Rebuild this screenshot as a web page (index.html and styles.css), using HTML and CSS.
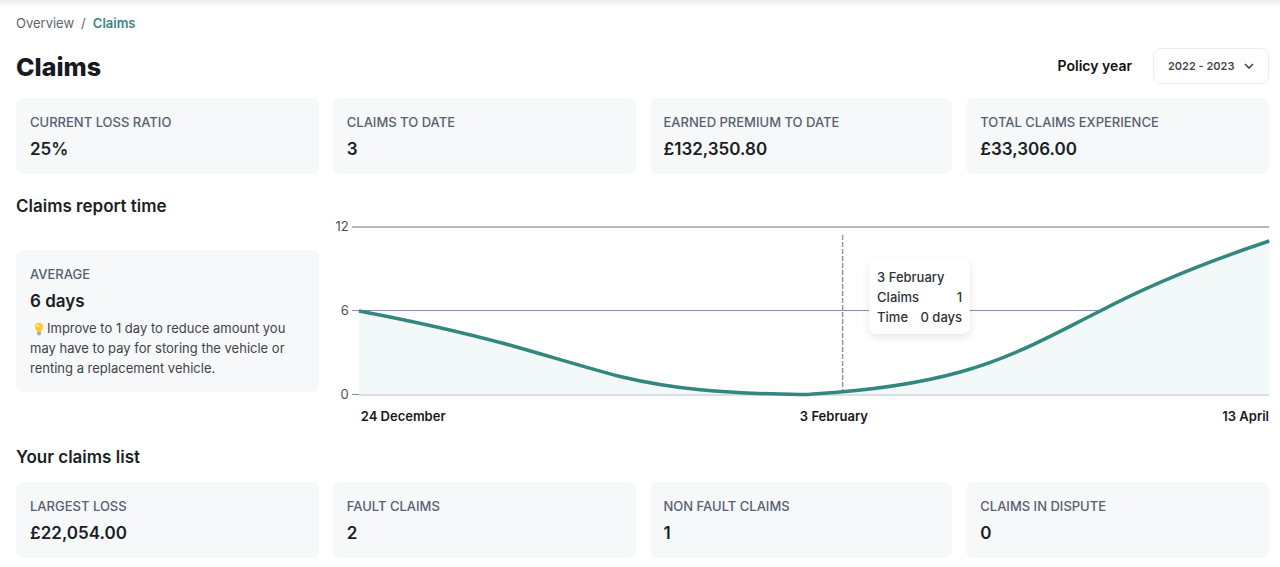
FILE: index.html
```
<!DOCTYPE html>
<html lang="en">
<head>
<meta charset="utf-8">
<meta name="viewport" content="width=device-width, initial-scale=1">
<title>Claims</title>
<link rel="stylesheet" href="styles.css">
</head>
<body>
<main class="page">
  <nav class="breadcrumb" aria-label="Breadcrumb">
    <a class="crumb" href="#">Overview</a>
    <span class="separator">/</span>
    <a class="crumb current" href="#" aria-current="page">Claims</a>
  </nav>

  <header class="page-header">
    <h1 class="page-title">Claims</h1>
    <div class="policy">
      <label class="policy-label" for="policy-year">Policy year</label>
      <div class="select-box">
        <select class="select" id="policy-year">
          <option>2022 - 2023</option>
        </select>
        <svg class="chevron" viewBox="0 0 10 6" aria-hidden="true"><path d="M1 1l4 4 4-4"/></svg>
      </div>
    </div>
  </header>

  <section class="cards">
    <article class="card"><h3 class="card-label">CURRENT LOSS RATIO</h3><p class="card-value">25%</p></article>
    <article class="card"><h3 class="card-label">CLAIMS TO DATE</h3><p class="card-value">3</p></article>
    <article class="card"><h3 class="card-label">EARNED PREMIUM TO DATE</h3><p class="card-value">£132,350.80</p></article>
    <article class="card"><h3 class="card-label">TOTAL CLAIMS EXPERIENCE</h3><p class="card-value">£33,306.00</p></article>
  </section>

  <section class="report">
    <div class="report-summary">
      <h2 class="section-title">Claims report time</h2>
      <article class="card">
        <h3 class="card-label">AVERAGE</h3>
        <p class="card-value">6 days</p>
        <p class="card-tip"><svg class="bulb" viewBox="0 0 10 14" aria-hidden="true"><path d="M3 10h4v2.500q-2 2-4 0z" fill="#a9adb3"/><path d="M5 .8a4 4 0 0 0-4 4c0 2.600 2 3.200 2 5.400h4c0-2.200 2-2.800 2-5.400a4 4 0 0 0-4-4z" fill="#fcc934"/><circle cx="3.800" cy="3.800" r="1.400" fill="#fff1a8"/><path d="M4 6l1 1 1-1M5 7v3" fill="none" stroke="#f5b52c" stroke-width=".5"/></svg>Improve to 1 day to reduce amount you may have to pay for storing the vehicle or renting a replacement vehicle.</p>
      </article>
    </div>

    <div class="chart">
      <div class="y-axis"><span>12</span><span>6</span><span>0</span></div>
      <div class="plot">
        <svg class="plot-svg" viewBox="0 0 917 168" preserveAspectRatio="none" role="img" aria-label="Claims report time by date">
          <path class="grid-line top" d="M0 0H917"/>
          <path class="grid-line" d="M0 83.500H917"/>
          <path class="grid-line" d="M0 167.500H7"/>
          <path class="area" d="M7 84C60 94 110 105 161 119C200 130 235 141 268 149.500C320 162 370 166.500 448 167.500Q455 167.700 461 167C510 164 565 157 608 145C660 131 700 108 748 84C805 54 860 33 917 14V168H7Z"/>
          <path class="base-line" d="M7 168H917"/>
          <path class="curve" d="M7 84C60 94 110 105 161 119C200 130 235 141 268 149.500C320 162 370 166.500 448 167.500Q455 167.700 461 167C510 164 565 157 608 145C660 131 700 108 748 84C805 54 860 33 917 14"/>
          <path class="marker" d="M490.500 8V163"/>
        </svg>
        <dl class="tooltip">
          <div class="tooltip-row">3 February</div>
          <div class="tooltip-row"><dt>Claims</dt><dd>1</dd></div>
          <div class="tooltip-row"><dt>Time</dt><dd>0 days</dd></div>
        </dl>
      </div>
      <div class="x-axis"><span>24 December</span><span>3 February</span><span>13 April</span></div>
    </div>
  </section>

  <h2 class="section-title">Your claims list</h2>
  <section class="cards">
    <article class="card"><h3 class="card-label">LARGEST LOSS</h3><p class="card-value">£22,054.00</p></article>
    <article class="card"><h3 class="card-label">FAULT CLAIMS</h3><p class="card-value">2</p></article>
    <article class="card"><h3 class="card-label">NON FAULT CLAIMS</h3><p class="card-value">1</p></article>
    <article class="card"><h3 class="card-label">CLAIMS IN DISPUTE</h3><p class="card-value">0</p></article>
  </section>
</main>
</body>
</html>
```
FILE: styles.css
```
* { box-sizing: border-box; }

body {
  margin: 0;
  font-family: Inter, "Liberation Sans", sans-serif;
  font-size: 13px;
  line-height: 20px;
  color: #1b1f24;
  background: #fff;
}

h1, h2, h3, p, dl, dd { margin: 0; }

.page {
  padding: 13px 11px 9px 16px;
  background: linear-gradient(#ececec, #fff 8px);
}

.breadcrumb { display: flex; gap: 7px; color: #5f666d; }
.crumb { color: inherit; text-decoration: none; }
.crumb.current { color: #3b8583; font-weight: 600; }

.page-header {
  display: flex;
  align-items: center;
  justify-content: space-between;
  margin: 15px 0 14px;
}
.page-title { padding-top: 2px; font-size: 25px; line-height: 34px; font-weight: 800; color: #171a22; }
.policy { display: flex; align-items: center; gap: 21px; }
.policy-label { font-size: 14px; font-weight: 600; color: #111; }

.select-box { position: relative; }
.select {
  display: block;
  width: 116px;
  height: 36px;
  padding: 0 24px 0 14px;
  border: 1px solid #ededee;
  border-radius: 8px;
  appearance: none;
  background: #fff;
  color: #43474c;
  font-family: inherit;
  font-size: 11px;
  font-weight: 600;
}
.chevron {
  position: absolute;
  top: 15px;
  right: 15px;
  width: 10px;
  height: 6px;
  fill: none;
  stroke: #3c4650;
  stroke-width: 1.6;
  pointer-events: none;
}

.cards { display: grid; grid-template-columns: repeat(4, 1fr); gap: 14px; }
.card { padding: 14px 14px 13px; border-radius: 7px; background: #f7f8fa; }
.card-label { font-size: 13px; line-height: 20px; font-weight: 500; color: #56616f; }
.card-value { padding-top: 5px; font-size: 17px; line-height: 24px; font-weight: 600; }
.card-tip { padding: 5px 0 1px; line-height: 20px; color: #3f4347; }
.bulb { width: 10px; height: 14px; margin: 0 3px 0 4px; vertical-align: -3px; }

.section-title { font-size: 17px; line-height: 24px; font-weight: 600; }

.report {
  display: grid;
  grid-template-columns: repeat(4, 1fr);
  gap: 14px;
  padding: 20px 0 19px;
}
.report-summary { display: flex; flex-direction: column; gap: 32px; }

.chart {
  grid-column: span 3;
  display: grid;
  grid-template-columns: 16px 1fr;
  align-content: start;
  gap: 11px 3px;
  padding-top: 33px;
}
.y-axis {
  display: flex;
  flex-direction: column;
  justify-content: space-between;
  margin: -11px 0 -9px;
  text-align: right;
  color: #4d5156;
}
.plot { position: relative; }
.plot-svg { display: block; width: 100%; height: 168px; overflow: visible; fill: none; }
.plot-svg path { vector-effect: non-scaling-stroke; }
.grid-line { stroke: #8592ad; stroke-width: 1; }
.grid-line.top { stroke: #b3b9c9; stroke-width: 2; }
.base-line { stroke: #d9dfe2; stroke-width: 2; }
.area { fill: #f3f9f9; }
.curve { stroke: #32877f; stroke-width: 3.5; }
.marker { stroke: #9298a3; stroke-width: 1.5; stroke-dasharray: 5 2; }

.tooltip {
  position: absolute;
  top: 32px;
  left: 56.4%;
  width: 101px;
  padding: 8px 8px 7px;
  border-radius: 7px;
  background: #fff;
  box-shadow: 0 3px 8px rgba(0, 0, 0, 0.1);
  font-weight: 500;
  color: #2e3237;
}
.tooltip-row { display: flex; justify-content: space-between; }

.x-axis {
  grid-column: 2;
  display: flex;
  justify-content: space-between;
  padding-left: 9px;
  font-weight: 600;
  color: #17191c;
}

.section-title + .cards { margin-top: 13px; }
```
